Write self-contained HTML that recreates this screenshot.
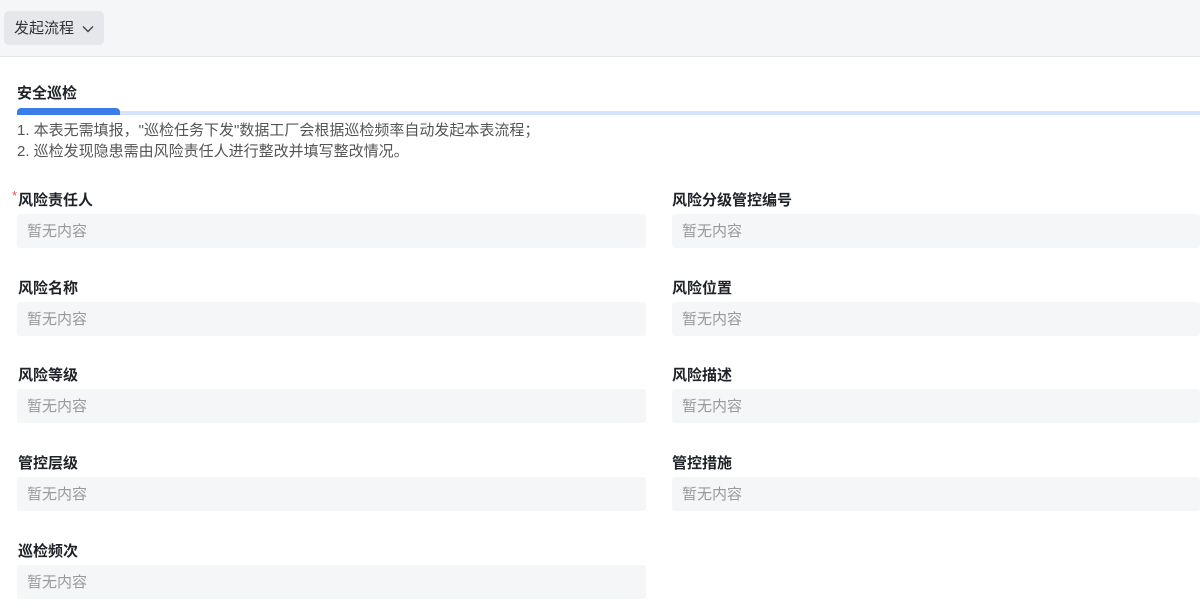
<!DOCTYPE html>
<html><head><meta charset="utf-8"><style>
*{margin:0;padding:0;box-sizing:border-box}
body{width:1200px;height:614px;background:#fff;font-family:"Liberation Sans","Noto Sans CJK SC",sans-serif;position:relative;overflow:hidden}
.top{position:absolute;left:0;top:0;width:1200px;height:57px;background:#f5f6f8;border-bottom:1px solid #e4e5e8}
.btn{position:absolute;left:4px;top:11px;width:100px;height:34px;background:#e6e7eb;border-radius:5px;font-size:15px;color:#333;line-height:36px;padding-left:10px}
.btn svg{position:absolute;left:78px;top:14px}
.title{position:absolute;left:17px;top:82px;font-size:15px;font-weight:bold;color:#1f2329}
.bar{position:absolute;left:17px;top:111px;width:1183px;height:4px;background:#d6e4fb}
.bar2{position:absolute;left:17px;top:108px;width:103px;height:7px;background:#3a7de8;border-radius:4px 4px 0 0}
.desc{position:absolute;left:17px;top:120px;font-size:15px;line-height:21px;color:#555}
.lab{position:absolute;font-size:15px;font-weight:bold;color:#1f2329}
.inp{position:absolute;height:34px;background:#f5f6f7;border-radius:3px;font-size:15px;color:#999;line-height:36px;padding-left:10px}
.star{color:#e34d59;font-weight:normal;position:absolute;left:-6px;top:-1px;font-size:13px}
</style></head><body>
<div class="top"><div class="btn">发起流程<svg width="12" height="8" viewBox="0 0 12 8"><path d="M1 1.5l5 5 5-5" fill="none" stroke="#444" stroke-width="1.4"/></svg></div></div>
<div class="title">安全巡检</div>
<div class="bar"></div><div class="bar2"></div>
<div class="desc">1. 本表无需填报，"巡检任务下发"数据工厂会根据巡检频率自动发起本表流程；<br>2. 巡检发现隐患需由风险责任人进行整改并填写整改情况。</div>

<div class="lab" style="left:18px;top:189px"><span class="star">*</span>风险责任人</div>
<div class="inp" style="left:17px;top:214px;width:629px">暂无内容</div>
<div class="lab" style="left:672px;top:189px">风险分级管控编号</div>
<div class="inp" style="left:672px;top:214px;width:528px">暂无内容</div>

<div class="lab" style="left:18px;top:277px">风险名称</div>
<div class="inp" style="left:17px;top:302px;width:629px">暂无内容</div>
<div class="lab" style="left:672px;top:277px">风险位置</div>
<div class="inp" style="left:672px;top:302px;width:528px">暂无内容</div>

<div class="lab" style="left:18px;top:364px">风险等级</div>
<div class="inp" style="left:17px;top:389px;width:629px">暂无内容</div>
<div class="lab" style="left:672px;top:364px">风险描述</div>
<div class="inp" style="left:672px;top:389px;width:528px">暂无内容</div>

<div class="lab" style="left:18px;top:452px">管控层级</div>
<div class="inp" style="left:17px;top:477px;width:629px">暂无内容</div>
<div class="lab" style="left:672px;top:452px">管控措施</div>
<div class="inp" style="left:672px;top:477px;width:528px">暂无内容</div>

<div class="lab" style="left:18px;top:540px">巡检频次</div>
<div class="inp" style="left:17px;top:565px;width:629px">暂无内容</div>
</body></html>
